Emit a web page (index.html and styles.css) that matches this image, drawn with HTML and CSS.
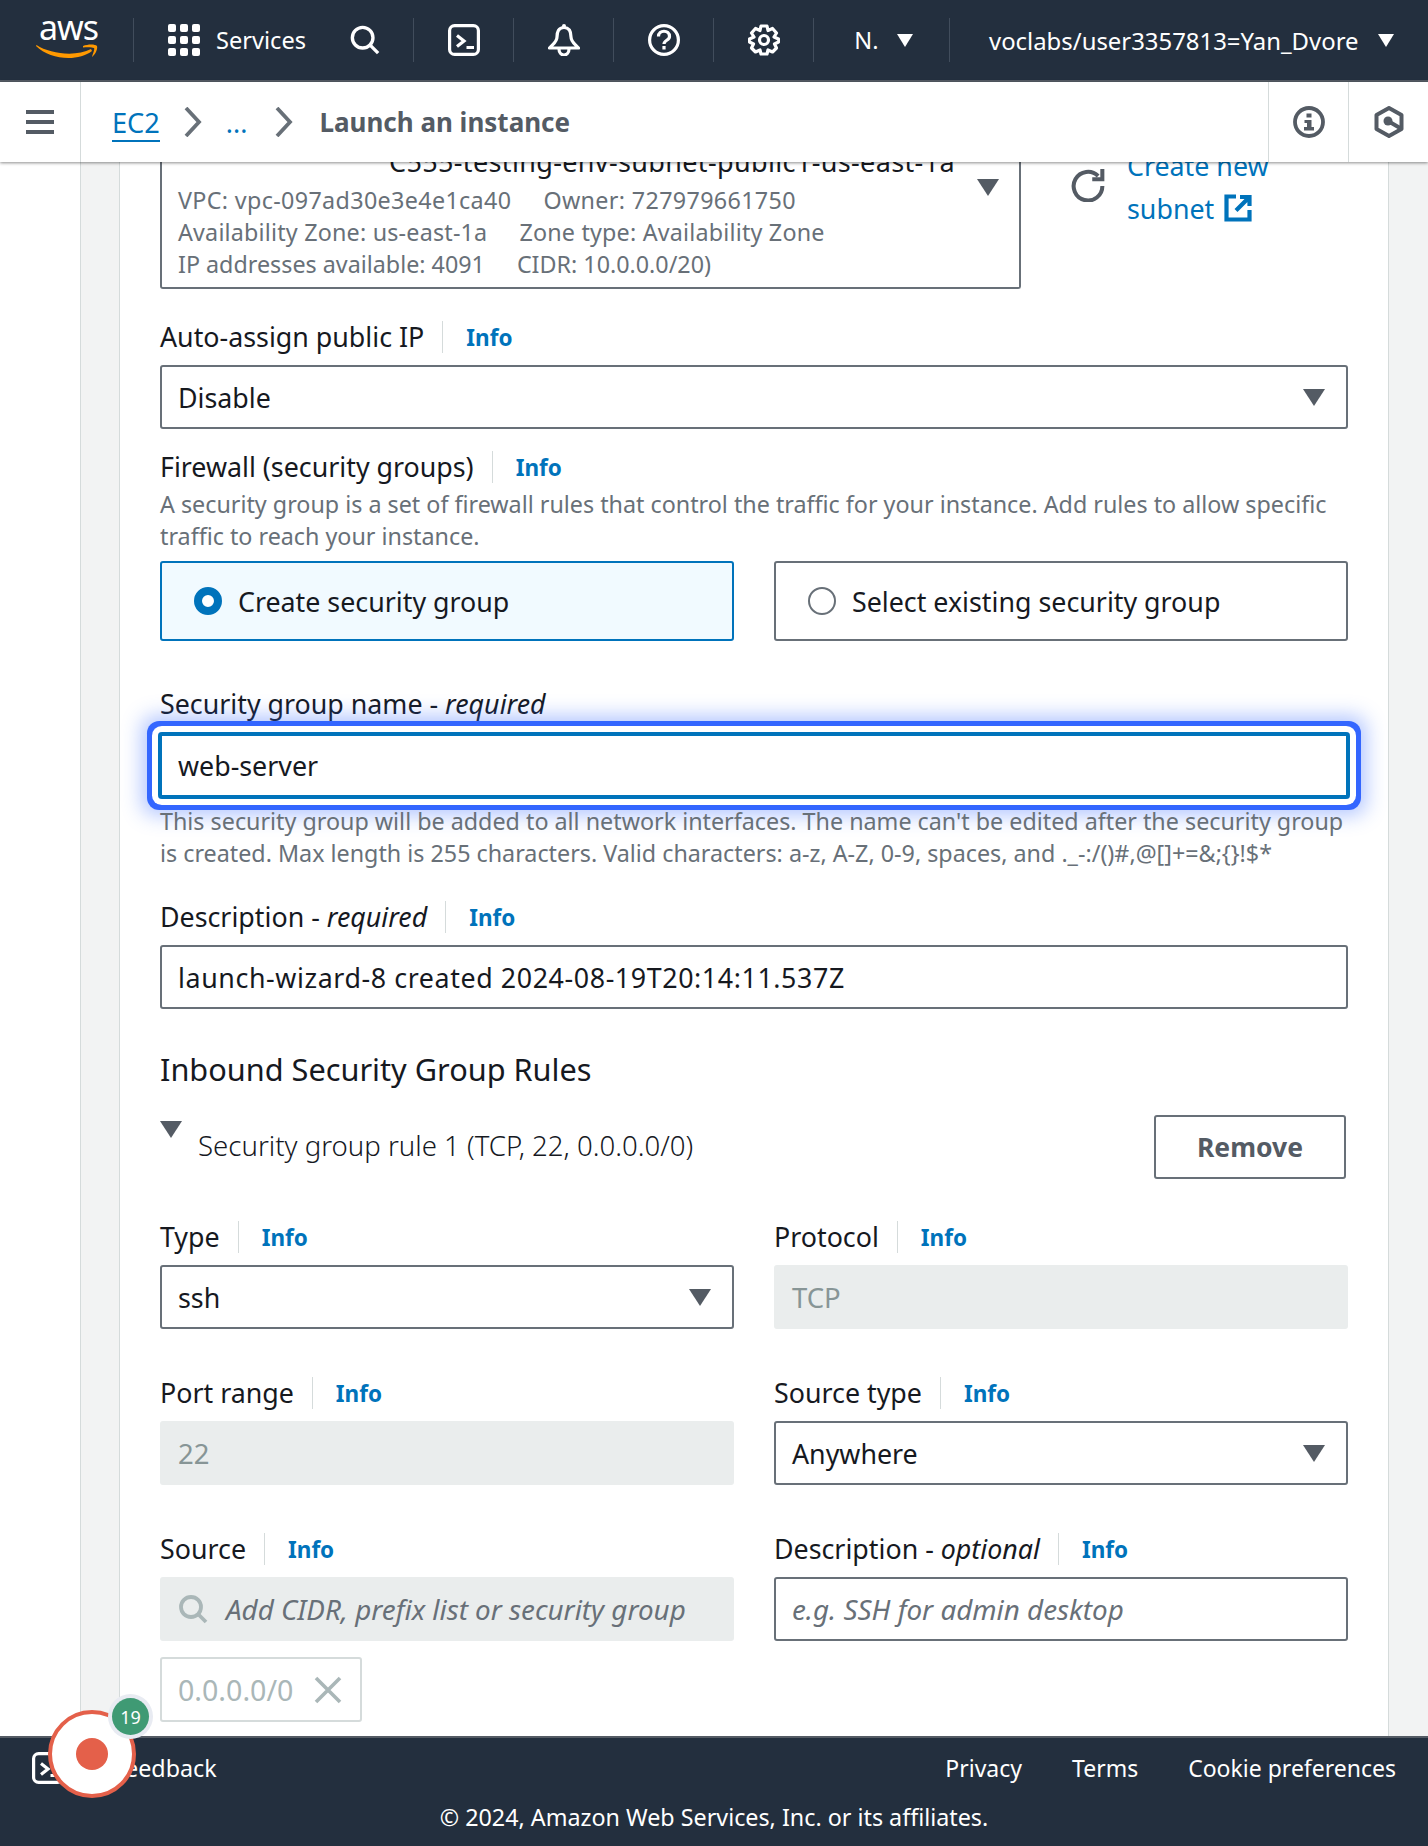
FILE: index.html
```html
<!DOCTYPE html>
<html lang="en">
<head>
    <meta charset="UTF-8">
    <meta name="viewport" content="width=device-width, initial-scale=1.0">
    <title>Launch an instance</title>
    <link rel="stylesheet" href="styles.css">
</head>
<body>
    <header class="topbar">
        <div class="top-section logo-section">
            <div class="aws-logo">
                <span class="aws-word">aws</span>
                <svg class="aws-smile" viewBox="0 0 62 16" width="62" height="16" fill="#f90"><path d="M0.500 1 C14 10 40 13 55 5 L56 7 C42 18 14 16 0 2 Z"/><path d="M47 2 C52 0 59 0 61 2 C62 5 59 11 56 13 C57 9 59 5 58 4 C56 3 51 3 47 3.500 Z"/></svg>
            </div>
        </div>
        <div class="top-section services-section">
            <svg class="icon-32" viewBox="0 0 32 32" fill="#fff"><rect x="0" y="0" width="8" height="8" rx="2"/><rect x="12" y="0" width="8" height="8" rx="2"/><rect x="24" y="0" width="8" height="8" rx="2"/><rect x="0" y="12" width="8" height="8" rx="2"/><rect x="12" y="12" width="8" height="8" rx="2"/><rect x="24" y="12" width="8" height="8" rx="2"/><rect x="0" y="24" width="8" height="8" rx="2"/><rect x="12" y="24" width="8" height="8" rx="2"/><rect x="24" y="24" width="8" height="8" rx="2"/></svg>
            <span class="services-text">Services</span>
            <svg class="icon-32 search-icon" viewBox="0 0 32 32" fill="none" stroke="#fff" stroke-width="3.600"><circle cx="13.500" cy="13.500" r="11"/><path d="M21.500 21.500 L30 30"/></svg>
        </div>
        <div class="top-section icon-section">
            <svg class="icon-32" viewBox="0 0 32 32" fill="none" stroke="#fff" stroke-width="3.200"><rect x="1.600" y="1.600" width="28.800" height="28.800" rx="5"/><path d="M9 11.500 L16 17 L9 22.500 M18.500 23.500 H26"/></svg>
        </div>
        <div class="top-section icon-section">
            <svg class="icon-32" viewBox="0 0 32 32" fill="none" stroke="#fff" stroke-width="3.200"><circle cx="16" cy="2" r="2" fill="#fff" stroke="none"/><path d="M16 3.500 C10.500 3.500 9 8 9 13 C9 18 5 20 1.500 24 H30.500 C27 20 23 18 23 13 C23 8 21.500 3.500 16 3.500 Z M11 25 C11 33 21 33 21 25" stroke-linejoin="round"/></svg>
        </div>
        <div class="top-section icon-section">
            <svg class="icon-32" viewBox="0 0 32 32" fill="none" stroke="#fff" stroke-width="3.200"><circle cx="16" cy="16" r="14.400"/><path d="M10.500 12.500 C10.500 5.500 21.500 5.500 21.500 12.500 C21.500 16.500 16 16 16 20"/><path d="M16 22 V25.500"/></svg>
        </div>
        <div class="top-section icon-section">
            <svg class="icon-32" viewBox="0 0 32 32" fill="none" stroke="#fff" stroke-width="3.200"><circle cx="16" cy="16" r="4.500"/><path d="M13 2 H19 L20 6.500 L24.500 4.500 L28.500 9 L26 13 L30.500 15 V18 L26.500 20 L28.500 24 L24.500 28 L20 26 L19 30 H13 L12 26 L7.500 28 L3.500 24 L5.500 20 L1.500 18 V15 L6 13 L3.500 9 L7.500 4.500 L12 6.500 Z" stroke-linejoin="round"/></svg>
        </div>
        <div class="top-section region-section">
            <span>N.</span>
            <span class="caret-white"></span>
        </div>
        <div class="top-section user-section">
            <span>voclabs/user3357813=Yan_Dvore</span>
            <span class="caret-white"></span>
        </div>
    </header>

    <div class="crumbbar">
        <div class="menu-cell">
            <svg viewBox="0 0 28 24" width="28" height="24" fill="#545b64"><rect width="28" height="4"/><rect y="10" width="28" height="4"/><rect y="20" width="28" height="4"/></svg>
        </div>
        <nav class="crumbs">
            <a class="crumb-link">EC2</a>
            <svg class="crumb-chev" viewBox="0 0 18 30" width="18" height="30" fill="none" stroke="#687078" stroke-width="3.800"><path d="M2 1 L15 15 L2 29"/></svg>
            <a class="crumb-dots">...</a>
            <svg class="crumb-chev" viewBox="0 0 18 30" width="18" height="30" fill="none" stroke="#687078" stroke-width="3.800"><path d="M2 1 L15 15 L2 29"/></svg>
            <span class="crumb-current">Launch an instance</span>
        </nav>
        <div class="crumb-tool">
            <svg class="icon-32" viewBox="0 0 32 32"><circle cx="16" cy="16" r="14" fill="none" stroke="#545b64" stroke-width="3.800"/><path fill="#545b64" d="M13.500 7.500 H18.500 V11.500 H13.500 Z M11.500 14 H18.500 V21 H21 V24.500 H11 V21 H14 V17 H11.500 Z"/></svg>
        </div>
        <div class="crumb-tool">
            <svg class="icon-32" viewBox="0 0 32 32" fill="none" stroke="#545b64" stroke-width="4"><path d="M16 2 L28.500 9 V23 L16 30 L3.500 23 V9 Z" stroke-linejoin="round"/><circle cx="15" cy="15" r="4.500" fill="#545b64" stroke="none"/><path d="M15 15 L27 22"/></svg>
        </div>
    </div>

    <main class="content">
        <div class="side-blank"></div>
        <div class="gutter"></div>
        <section class="card">
            <div class="subnet-row">
                <div class="subnet-select">
                    <div class="subnet-name">C555-testing-env-subnet-public1-us-east-1a</div>
                    <div class="subnet-line line-vpc"><span class="col-a">VPC: vpc-097ad30e3e4e1ca40</span><span>Owner: 727979661750</span></div>
                    <div class="subnet-line"><span class="col-a">Availability Zone: us-east-1a</span><span>Zone type: Availability Zone</span></div>
                    <div class="subnet-line line-ip"><span class="col-a">IP addresses available: 4091</span><span>CIDR: 10.0.0.0/20)</span></div>
                    <span class="caret subnet-caret"></span>
                </div>
                <svg class="refresh-icon" viewBox="0 0 32 32" width="34" height="34" fill="none" stroke="#545b64" stroke-width="3.800"><path d="M25.500 7.500 A13.500 13.500 0 1 0 29.500 17"/><path d="M20 10.500 H29.500 V1"/></svg>
                <div class="subnet-link">
                    <a>Create new</a>
                    <a>subnet <svg class="ext-icon" viewBox="0 0 28 28" width="28" height="28" fill="none" stroke="#0073bb" stroke-width="4.200"><path d="M12 2.500 H2.500 V25.500 H25.500 V16 M16 3 H25.500 V12 M25.500 3 L12 16.500"/></svg></a>
                </div>
            </div>

            <div class="field field-auto">
                <div class="label-row"><span class="label">Auto-assign public IP</span><a class="info">Info</a></div>
                <div class="control select">Disable<span class="caret"></span></div>
            </div>

            <div class="field field-firewall">
                <div class="label-row"><span class="label">Firewall (security groups)</span><a class="info">Info</a></div>
                <p class="hint">A security group is a set of firewall rules that control the traffic for your instance. Add rules to allow specific traffic to reach your instance.</p>
                <div class="tiles">
                    <div class="tile tile-on"><span class="radio radio-on"></span>Create security group</div>
                    <div class="tile"><span class="radio"></span>Select existing security group</div>
                </div>
            </div>

            <div class="field field-name">
                <div class="label-row"><span class="label">Security group name - <em>required</em></span></div>
                <div class="control control-focus">web-server</div>
                <p class="hint hint-after">This security group will be added to all network interfaces. The name can't be edited after the security group is created. Max length is 255 characters. Valid characters: a-z, A-Z, 0-9, spaces, and ._-:/()#,@[]+=&amp;;{}!$*</p>
            </div>

            <div class="field field-desc">
                <div class="label-row"><span class="label">Description - <em>required</em></span><a class="info">Info</a></div>
                <div class="control control-stamp">launch-wizard-8 created 2024-08-19T20:14:11.537Z</div>
            </div>

            <h2 class="rules-title">Inbound Security Group Rules</h2>

            <div class="rule-head">
                <span class="caret rule-caret"></span>
                <span class="rule-name">Security group rule 1 (TCP, 22, 0.0.0.0/0)</span>
                <button class="remove-btn">Remove</button>
            </div>

            <div class="rule-grid">
                <div class="field">
                    <div class="label-row"><span class="label">Type</span><a class="info">Info</a></div>
                    <div class="control select">ssh<span class="caret"></span></div>
                </div>
                <div class="field">
                    <div class="label-row"><span class="label">Protocol</span><a class="info">Info</a></div>
                    <div class="control control-off">TCP</div>
                </div>
                <div class="field">
                    <div class="label-row"><span class="label">Port range</span><a class="info">Info</a></div>
                    <div class="control control-off">22</div>
                </div>
                <div class="field">
                    <div class="label-row"><span class="label">Source type</span><a class="info">Info</a></div>
                    <div class="control select">Anywhere<span class="caret"></span></div>
                </div>
                <div class="field">
                    <div class="label-row"><span class="label">Source</span><a class="info">Info</a></div>
                    <div class="control control-off control-search">
                        <svg viewBox="0 0 30 30" width="30" height="30" fill="none" stroke="#aab7b8" stroke-width="3.800"><circle cx="13" cy="13" r="10"/><path d="M20 20 L28 28"/></svg>
                        <span class="placeholder">Add CIDR, prefix list or security group</span>
                    </div>
                    <div class="token">0.0.0.0/0
                        <svg viewBox="0 0 28 28" width="28" height="28" fill="none" stroke="#aab7b8" stroke-width="3.600"><path d="M2 2 L26 26 M26 2 L2 26"/></svg>
                    </div>
                </div>
                <div class="field">
                    <div class="label-row"><span class="label">Description - <em>optional</em></span><a class="info">Info</a></div>
                    <div class="control"><span class="placeholder">e.g. SSH for admin desktop</span></div>
                </div>
            </div>
        </section>
        <div class="gutter gutter-right"></div>
    </main>

    <footer class="footer">
        <div class="footer-row">
            <div class="feedback">
                <svg class="icon-32" viewBox="0 0 32 32" fill="none" stroke="#fff" stroke-width="3.200"><rect x="1.600" y="1.600" width="28.800" height="28.800" rx="5"/><path d="M9 11.500 L16 17 L9 22.500 M18.500 23.500 H26"/></svg>
                <span>Feedback</span>
            </div>
            <div class="footer-links">
                <a>Privacy</a>
                <a>Terms</a>
                <a>Cookie preferences</a>
            </div>
        </div>
        <div class="copyright">© 2024, Amazon Web Services, Inc. or its affiliates.</div>
    </footer>

    <div class="recorder"><span class="recorder-dot"></span></div>
    <div class="recorder-badge">19</div>
</body>
</html>
```

FILE: styles.css
```css
* {
    box-sizing: border-box;
}
html, body {
    margin: 0;
    height: 100%;
}
body {
    font-family: "Noto Sans", "Open Sans", sans-serif;
    font-size: 26.8px;
    color: #16191f;
    display: flex;
    flex-direction: column;
    height: 1846px;
    overflow: hidden;
    position: relative;
    background: #fff;
}
.icon-32 {
    width: 32px;
    height: 32px;
    flex: none;
}

/* top bar */
.topbar {
    height: 82px;
    flex: none;
    background: #232f3e;
    border-bottom: 2px solid #545b64;
    display: flex;
    align-items: center;
    color: #fff;
    font-size: 23.6px;
}
.top-section {
    height: 44px;
    display: flex;
    align-items: center;
    border-right: 1px solid #414d5c;
}
.logo-section {
    width: 134px;
    justify-content: center;
}
.aws-logo {
    display: flex;
    flex-direction: column;
    align-items: center;
    margin-top: -4px;
}
.aws-word {
    font-size: 34px;
    line-height: 30px;
    letter-spacing: -1px;
    margin: -4px 0 0 4px;
}
.aws-smile {
    margin-top: 2px;
}
.services-section {
    width: 280px;
    padding-left: 34px;
}
.services-text {
    margin-left: 16px;
    margin-right: 44px;
}
.search-icon {
    width: 30px;
    height: 30px;
}
.icon-section {
    width: 100px;
    justify-content: center;
}
.region-section {
    width: 136px;
    justify-content: center;
    gap: 18px;
    padding-left: 4px;
}
.user-section {
    border-right: 0;
    padding-left: 39px;
    gap: 19px;
    font-size: 23.9px;
}
.caret-white {
    width: 0;
    height: 0;
    border-left: 8px solid transparent;
    border-right: 8px solid transparent;
    border-top: 13px solid #fff;
}

/* breadcrumb bar */
.crumbbar {
    height: 80px;
    flex: none;
    display: flex;
    align-items: center;
    background: #fff;
    box-shadow: 0 1px 3px rgba(0, 0, 0, 0.45);
    position: relative;
    z-index: 2;
}
.menu-cell {
    width: 81px;
    height: 100%;
    border-right: 1px solid #d5dbdb;
    display: flex;
    align-items: center;
    padding-left: 26px;
}
.crumbs {
    flex: 1;
    display: flex;
    align-items: center;
    padding-left: 31px;
}
.crumb-link {
    color: #0073bb;
    border-bottom: 2px solid #0073bb;
    line-height: 34px;
    margin: 4px 24px 0 0;
    font-size: 27.2px;
}
.crumb-chev {
    flex: none;
}
.crumb-dots {
    color: #0073bb;
    margin: 0 28px 0 24px;
}
.crumb-current {
    color: #545b64;
    font-weight: 700;
    font-size: 26px;
    margin-left: 26px;
}
.crumb-tool {
    width: 80px;
    height: 100%;
    border-left: 1px solid #d5dbdb;
    display: flex;
    align-items: center;
    justify-content: center;
}

/* main scrolled area */
.content {
    flex: 1;
    min-height: 0;
    display: flex;
    overflow: hidden;
}
.side-blank {
    width: 81px;
    flex: none;
    border-right: 1px solid #d5dbdb;
}
.gutter {
    width: 39px;
    flex: none;
    background: #f2f3f3;
    border-right: 1px solid #d5dbdb;
}
.gutter-right {
    flex: 1;
    border-right: 0;
    border-left: 1px solid #d5dbdb;
}
.card {
    width: 1268px;
    flex: none;
    padding: 0 40px;
    background: #fff;
    margin-top: -22px;
}

/* subnet select */
.subnet-row {
    display: flex;
    align-items: flex-start;
}
.subnet-select {
    width: 861px;
    height: 149px;
    border: 2px solid #687078;
    border-top: 0;
    border-radius: 0 0 3px 3px;
    padding: 6px 16px 0;
    position: relative;
    font-size: 23.3px;
    line-height: 32px;
    color: #687078;
}
.subnet-name {
    color: #16191f;
    font-size: 27px;
    letter-spacing: 0.35px;
    padding-left: 211px;
    margin-bottom: 6px;
    white-space: nowrap;
}
.subnet-line {
    display: flex;
    letter-spacing: 0.2px;
}
.line-vpc {
    letter-spacing: 0.35px;
}
.line-ip {
    letter-spacing: 0;
}
.col-a {
    margin-right: 32px;
}
.subnet-caret {
    position: absolute;
    right: 15px;
    top: 39px;
}
.refresh-icon {
    margin: 28px 0 0 50px;
    flex: none;
}
.subnet-link {
    margin: 0 0 0 22px;
    padding-top: 4px;
    color: #0073bb;
    line-height: 43px;
    width: 150px;
}
.subnet-link a {
    display: block;
}
.ext-icon {
    margin-left: 3px;
    vertical-align: -3px;
}

/* fields */
.label-row {
    display: flex;
    align-items: center;
    height: 32px;
}
.label {
    padding-right: 18px;
    border-right: 1px solid #d5dbdb;
    line-height: 32px;
}
.label:last-child {
    border-right: 0;
}
.info {
    color: #0073bb;
    font-weight: 700;
    font-size: 22.5px;
    margin-left: 23px;
}
.control {
    height: 64px;
    border: 2px solid #687078;
    border-radius: 3px;
    display: flex;
    align-items: center;
    padding: 0 16px;
    margin-top: 12px;
    position: relative;
}
.select {
    justify-content: space-between;
}
.caret {
    width: 0;
    height: 0;
    flex: none;
    border-left: 11px solid transparent;
    border-right: 11px solid transparent;
    border-top: 17px solid #545b64;
    margin-right: 5px;
}
.hint {
    margin: 5px 0 0;
    font-size: 23.3px;
    line-height: 32px;
    color: #687078;
}
.field-auto {
    margin-top: 32px;
}
.field-firewall {
    margin-top: 22px;
}
.tiles {
    display: grid;
    grid-template-columns: 574px 574px;
    column-gap: 40px;
    margin-top: 9px;
}
.tile {
    height: 80px;
    border: 2px solid #687078;
    border-radius: 3px;
    display: flex;
    align-items: center;
    padding-left: 32px;
}
.tile-on {
    border-color: #0073bb;
    background: #f1faff;
}
.radio {
    width: 28px;
    height: 28px;
    border-radius: 50%;
    border: 2px solid #687078;
    background: #fff;
    margin-right: 16px;
    flex: none;
}
.radio-on {
    border: 8px solid #0073bb;
}
.field-name {
    margin-top: 47px;
}
.control-focus {
    height: 67px;
    border: 4px solid #0073bb;
    border-radius: 4px;
    margin: 12px -2px 0;
    padding: 0 16px;
    box-shadow: 0 0 0 6px #fff, 0 0 0 11px #3366ff, 0 0 20px 16px rgba(51, 102, 255, 0.38);
    z-index: 0;
}
.hint-after {
    margin-top: 6px;
    position: relative;
    z-index: 1;
}
.field-desc {
    margin-top: 32px;
}
.control-stamp {
    letter-spacing: 0.6px;
}
.rules-title {
    font-size: 30.7px;
    font-weight: 400;
    line-height: 40px;
    margin: 40px 0 0;
}
.rule-head {
    display: flex;
    align-items: center;
    margin-top: 26px;
    height: 64px;
    position: relative;
}
.rule-caret {
    position: absolute;
    left: 0;
    top: 6px;
}
.rule-name {
    margin: 0 0 4px 38px;
    flex: 1;
    color: #16191f;
    font-size: 27.6px;
    font-weight: 300;
}
.remove-btn {
    width: 192px;
    height: 64px;
    border: 2px solid #687078;
    border-radius: 3px;
    background: #fff;
    color: #545b64;
    font: 700 26.5px "Noto Sans", sans-serif;
    margin-right: 2px;
}
.rule-grid {
    display: grid;
    grid-template-columns: 574px 574px;
    column-gap: 40px;
    row-gap: 48px;
    margin-top: 42px;
}
.rule-grid .control {
    margin-top: 12px;
}
.control-off {
    background: #eaeded;
    border-color: #eaeded;
    color: #879596;
    font-size: 27.5px;
}
.control-search {
    gap: 18px;
}
.placeholder {
    font-style: italic;
    font-size: 27.8px;
    color: #687078;
}
.token {
    width: 202px;
    height: 65px;
    margin-top: 16px;
    border: 2px solid #d5dbdb;
    border-radius: 3px;
    color: #aab7b8;
    font-size: 28.6px;
    display: flex;
    align-items: center;
    justify-content: space-between;
    padding: 0 18px 0 16px;
}

/* footer */
.footer {
    height: 110px;
    flex: none;
    background: #232f3e;
    border-top: 2px solid #545b64;
    color: #fff;
    font-size: 23.3px;
    position: relative;
    z-index: 2;
}
.footer-row {
    display: flex;
    justify-content: space-between;
    align-items: center;
    padding: 14px 32px 0;
}
.feedback {
    display: flex;
    align-items: center;
    gap: 49px;
}
.footer-links {
    display: flex;
    gap: 50px;
    font-size: 23px;
}
.copyright {
    text-align: center;
    margin-top: 17px;
}

/* screen recorder widget over the page */
.recorder {
    position: absolute;
    left: 48px;
    top: 1710px;
    width: 88px;
    height: 88px;
    border-radius: 50%;
    border: 4px solid #e4604a;
    background: #fff;
    display: flex;
    align-items: center;
    justify-content: center;
    z-index: 3;
}
.recorder-dot {
    width: 32px;
    height: 32px;
    border-radius: 50%;
    background: #e4604a;
}
.recorder-badge {
    position: absolute;
    left: 112px;
    top: 1698px;
    width: 37px;
    height: 37px;
    border-radius: 50%;
    background: #3f9a74;
    box-shadow: 0 0 0 4px #e8ebf2;
    color: #fff;
    font-size: 18px;
    display: flex;
    align-items: center;
    justify-content: center;
    z-index: 4;
}
```
